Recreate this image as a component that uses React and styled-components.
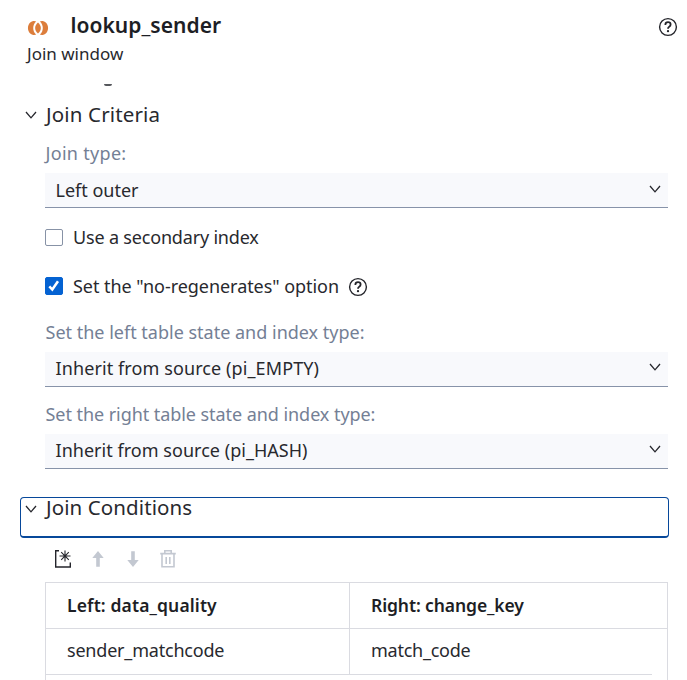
import React from 'react';
import styled, { createGlobalStyle } from 'styled-components';

const Global = createGlobalStyle`
  * { box-sizing: border-box; }
  html, body { margin: 0; height: 100%; overflow: hidden; background: #fff; }
`;

const Panel = styled.main`
  width: 687px;
  height: 680px;
  overflow: hidden;
  background: #fff;
  color: #28292e;
  font: 400 18px/24px "Noto Sans", sans-serif;
  white-space: nowrap;
`;
const Text = styled.span`letter-spacing: ${p => p.$track || 0}px;`;

const Header = styled.header`
  height: 82px;
  padding: 11px 9px 0 26px;
`;
const TitleRow = styled.div`
  display: flex;
  align-items: center;
  height: 30px;
`;
const JoinIcon = styled.svg`
  width: 22px;
  height: 16px;
  margin: 4px 22px 0 1px;
`;
const Title = styled.h1`
  flex: 1;
  margin: 0 0 0 -0.5px;
  padding-bottom: 2px;
  font-size: 21px;
  font-weight: 600;
  line-height: 28px;
  color: #1d1e25;
`;
const Subtitle = styled.p`
  margin: 0;
  padding-left: 1px;
  font-size: 17px;
  line-height: 26px;
`;
const ClippedRow = styled.div`
  height: 20px;
  padding: 2px 0 0 104px;
`;
const ClippedDescender = styled.div`
  width: 8px;
  height: 2px;
  border-radius: 0 0 3px 3px;
  background: #55575c;
`;

const Chevron = styled.svg`
  flex: none;
  width: 12px;
  height: 8px;
  fill: none;
  stroke: #25262c;
  stroke-width: 1.3;
`;
const SectionTitle = styled.h2`
  display: flex;
  align-items: center;
  gap: 9.5px;
  height: 26px;
  margin: 0;
  padding-left: 24.5px;
  font-size: 20.5px;
  font-weight: 400;
  line-height: 24px;
  padding-bottom: 2px;
  ${Chevron} { margin-top: 2px; }
`;
const FocusedSection = styled.div`
  height: 41px;
  margin: 28px 18px 0 20px;
  border: 1px solid #07489a;
  border-bottom-width: 2px;
  border-radius: 4px;
  ${SectionTitle} { height: 18px; padding: 0 0 0 3.5px; line-height: 18px; }
  ${Chevron} { margin-top: 4px; }
`;

const Fields = styled.div`margin: 0 19px 0 45px;`;
const Label = styled.div`
  height: ${p => p.$h}px;
  padding-top: ${p => p.$top}px;
  padding-left: 0.5px;
  color: #748095;
`;
const Select = styled.div`
  display: flex;
  align-items: center;
  justify-content: space-between;
  height: 35px;
  padding: ${p => p.$drop || 0}px 7.5px 0 10.5px;
  border-bottom: 1px solid #8793a9;
  background: #f8f9fc;
  line-height: 30px;
  ${Text} { padding-bottom: 2px; }
  ${Chevron} { margin-bottom: 4px; }
`;
const Check = styled.div`
  display: flex;
  align-items: center;
  height: 24px;
  margin-top: ${p => p.$top}px;
`;
const Box = styled.span`
  display: grid;
  place-items: center;
  width: 18px;
  height: ${p => (p.$on ? 18 : 17)}px;
  margin-right: 10px;
  border: 1px solid ${p => (p.$on ? '#0462d2' : '#8792a6')};
  border-radius: 2px;
  background: ${p => (p.$on ? '#0462d2' : '#fff')};
`;
const HelpSvg = styled.svg`
  flex: none;
  width: 20px;
  height: 20px;
  margin-top: 1px;
  fill: none;
  stroke: #24252b;
`;
const Spacer = styled.span`width: 9px;`;

const Toolbar = styled.div`
  display: flex;
  align-items: center;
  gap: 15px;
  height: 44px;
  padding: 0 0 2px 53px;
`;
const ToolIcon = styled.svg`
  width: 20px;
  height: 20px;
  color: ${p => (p.$active ? '#24252b' : '#c3c8d1')};
`;

const Table = styled.div`
  height: 110px;
  margin: 0 19px 0 45px;
  border: 1px solid #dadbe1;
  border-bottom: 0;
`;
const Row = styled.div`
  display: grid;
  grid-template-columns: 304px 1fr;
  height: 46px;
  margin-right: ${p => (p.$head ? 0 : 15)}px;
  border-bottom: 1px solid #dadbe1;
  font-size: ${p => (p.$head ? 17.5 : 18)}px;
  font-weight: ${p => (p.$head ? 600 : 400)};
  color: ${p => (p.$head ? '#1d1e25' : '#28292e')};
`;
const Cell = styled.div`
  padding: 0 0 0 21px;
  line-height: ${p => (p.$head ? 45 : 43)}px;
  border-right: ${p => (p.$divider ? '1px solid #dadbe1' : '0')};
`;

const Down = () => (
  <Chevron viewBox="0 0 12 8"><path d="M1 1 6 6.8 11 1" /></Chevron>
);
const Help = () => (
  <HelpSvg viewBox="0 0 20 20">
    <circle cx="10" cy="10" r="8.4" strokeWidth="1.4" />
    <path d="M7.4 8V7.6Q7.4 5.2 10 5.2t2.6 2.3Q12.6 8.8 11.2 9.7 10 10.5 10 11.8" strokeWidth="1.8" />
    <circle cx="10" cy="14.2" r="1.15" fill="#24252b" stroke="none" />
  </HelpSvg>
);

export default function App() {
  return (
    <Panel>
      <Global />
      <Header>
        <TitleRow>
          <JoinIcon viewBox="0 0 22 16" fill="#dc7d3b">
            <path d="M9.2 1.4A6.2 7 0 1 0 9.2 14.6C5.2 11.4 5.2 4.6 9.2 1.4ZM12.8 1.4A6.2 7 0 1 1 12.8 14.6C16.8 11.4 16.8 4.6 12.8 1.4ZM11 2.4C7.2 5.6 7.2 10.4 11 13.6 14.8 10.4 14.8 5.6 11 2.4Z" />
          </JoinIcon>
          <Title><Text $track={0.03}>lookup_sender</Text></Title>
          <Help />
        </TitleRow>
        <Subtitle>Join window</Subtitle>
      </Header>
      <ClippedRow><ClippedDescender /></ClippedRow>

      <SectionTitle><Down /><Text $track={0.15}>Join Criteria</Text></SectionTitle>
      <Fields>
        <Label $h={45} $top={13}><Text $track={0.3}>Join type:</Text></Label>
        <Select $drop={2}><Text>Left outer</Text><Down /></Select>
        <Check $top={17}>
          <Box />
          <Text $track={-0.18}>Use a secondary index</Text>
        </Check>
        <Check $top={25}>
          <Box $on>
            <svg width="14" height="14" viewBox="0 0 14 14" fill="none" stroke="#fff" strokeWidth="2.5"><path d="m2.3 7.3 3 3.2L11 2.3" /></svg>
          </Box>
          <Text $track={-0.05}>Set the "no-regenerates" option</Text>
          <Spacer />
          <Help />
        </Check>
        <Label $h={54} $top={22}><Text>Set the left table state and index type:</Text></Label>
        <Select><Text $track={0.1}>Inherit from source (pi_EMPTY)</Text><Down /></Select>
        <Label $h={47} $top={15}><Text $track={-0.06}>Set the right table state and index type:</Text></Label>
        <Select><Text $track={0.03}>Inherit from source (pi_HASH)</Text><Down /></Select>
      </Fields>

      <FocusedSection>
        <SectionTitle><Down /><Text $track={0.1}>Join Conditions</Text></SectionTitle>
      </FocusedSection>
      <Toolbar>
        <ToolIcon $active viewBox="0 0 20 20" fill="none" stroke="currentColor" strokeWidth="1.4">
          <path d="M6 1.7H2.7V18H17.3V13.5" />
          <path d="M12 1.5v11M6.5 7h11M8.2 3.2l7.6 7.6M15.8 3.2l-7.6 7.6" strokeWidth="1.1" />
        </ToolIcon>
        <ToolIcon viewBox="0 0 20 20" fill="currentColor"><path d="M10 2 15.7 9H11.8V17.8H8.2V9H4.3Z" /></ToolIcon>
        <ToolIcon viewBox="0 0 20 20" fill="currentColor"><path d="M10 18 4.3 11H8.2V2.2h3.6V11h3.9Z" /></ToolIcon>
        <ToolIcon viewBox="0 0 20 20" fill="none" stroke="currentColor" strokeWidth="1.6">
          <path d="M2.2 4.6H17.8M6.8 4.2V1.8h6.4V4.2M4 4.8V17.8H16V4.8M8.2 8v7M11.8 8v7" />
        </ToolIcon>
      </Toolbar>
      <Table>
        <Row $head>
          <Cell $head $divider><Text $track={0.12}>Left: data_quality</Text></Cell>
          <Cell $head><Text $track={-0.1}>Right: change_key</Text></Cell>
        </Row>
        <Row>
          <Cell $divider><Text $track={-0.2}>sender_matchcode</Text></Cell>
          <Cell><Text $track={-0.25}>match_code</Text></Cell>
        </Row>
      </Table>
    </Panel>
  );
}
